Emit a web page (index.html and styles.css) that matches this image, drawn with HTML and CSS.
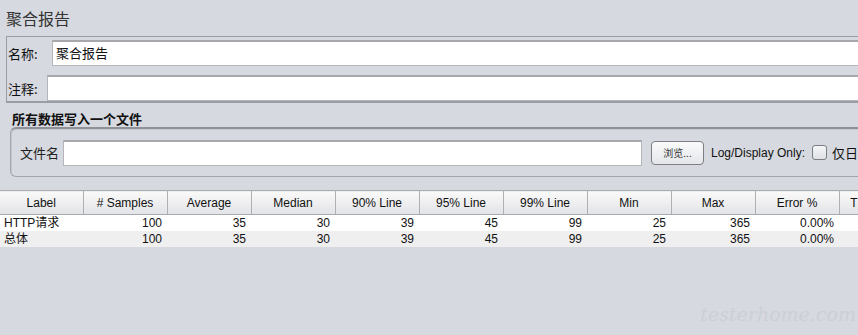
FILE: index.html
```html
<!DOCTYPE html>
<html>
<head>
<meta charset="utf-8">
<link rel="stylesheet" href="styles.css">
</head>
<body>
<div class="page">
  <div class="title">聚合报告</div>
  <div class="panel">
    <div class="row row-name">
      <span class="lbl">名称:</span>
      <div class="field field-name">聚合报告</div>
    </div>
    <div class="row row-comment">
      <span class="lbl lbl-c">注释:</span>
      <div class="field field-comment"></div>
    </div>
  </div>
  <div class="sec-title">所有数据写入一个文件</div>
  <div class="filebox">
    <span class="fl">文件名</span>
    <div class="field file-input"></div>
    <div class="btn">浏览...</div>
    <span class="logtxt">Log/Display Only:</span>
    <span class="check"></span>
    <span class="only">仅日志错误</span>
  </div>
  <table class="grid">
    <thead>
      <tr>
        <th class="c0">Label</th><th># Samples</th><th>Average</th><th>Median</th><th>90% Line</th><th>95% Line</th><th>99% Line</th><th>Min</th><th>Max</th><th>Error %</th><th>Throughput</th>
      </tr>
    </thead>
    <tbody>
      <tr class="r1">
        <td class="c0">HTTP请求</td><td>100</td><td>35</td><td>30</td><td>39</td><td>45</td><td>99</td><td>25</td><td>365</td><td>0.00%</td><td></td>
      </tr>
      <tr class="r2">
        <td class="c0">总体</td><td>100</td><td>35</td><td>30</td><td>39</td><td>45</td><td>99</td><td>25</td><td>365</td><td>0.00%</td><td></td>
      </tr>
    </tbody>
  </table>
  <div class="watermark">testerhome.com</div>
</div>
</body>
</html>
```
FILE: styles.css
```css
html, body {
  margin: 0;
  padding: 0;
  width: 858px;
  height: 335px;
  overflow: hidden;
  background: #d6d9df;
}
.page {
  position: relative;
  width: 858px;
  height: 335px;
  overflow: hidden;
  font-family: "Liberation Sans", "Noto Sans CJK SC", sans-serif;
  color: #111;
}
.title {
  font-family: "Noto Sans CJK SC", sans-serif;
  font-size: 16px;
  line-height: 20px;
  color: #333;
  padding: 8px 0 0 6px;
  height: 28px;
}
.panel {
  margin-left: 6px;
  width: 900px;
  height: 61px;
  border: 1px solid #9b9da2;
  border-bottom: 2px solid #9b9da2;
  padding: 3px 0 0 1px;
}
.row {
  display: flex;
  align-items: center;
  height: 26px;
}
.row-comment {
  margin-top: 9px;
}
.lbl {
  font-family: "Noto Sans CJK SC", sans-serif;
  font-size: 13px;
  width: 44px;
  color: #111;
}
.lbl-c {
  width: 39px;
}
.field {
  background: #fff;
  border: 1px solid #b4b6ba;
  border-top: 2px solid #a6a8ac;
  box-sizing: border-box;
  height: 26px;
}
.field-name, .field-comment {
  flex: 1;
}
.field-name {
  font-family: "Noto Sans CJK SC", sans-serif;
  font-size: 13px;
  line-height: 22px;
  padding-left: 3px;
}
.sec-title {
  font-family: "Noto Sans CJK SC", sans-serif;
  font-weight: bold;
  font-size: 13px;
  line-height: 16px;
  margin: 8px 0 0 12px;
  height: 16px;
  color: #111;
}
.filebox {
  margin-left: 10px;
  width: 900px;
  height: 50px;
  border: 1px solid #a4a6ab;
  border-top: 2px solid #8f9196;
  border-radius: 6px;
  box-shadow: inset 1px 1px 0 #c4c7cc;
  display: flex;
  align-items: center;
  box-sizing: border-box;
}
.fl {
  font-family: "Noto Sans CJK SC", sans-serif;
  font-size: 13px;
  margin-left: 9px;
  width: 43px;
  color: #222;
}
.file-input {
  width: 579px;
  height: 26px;
}
.btn {
  margin-left: 9px;
  width: 53px;
  height: 24px;
  box-sizing: border-box;
  border: 1px solid #7d7f84;
  border-radius: 4px;
  background: linear-gradient(#fbfbfc, #e4e6ea);
  font-family: "Noto Sans CJK SC", sans-serif;
  font-size: 10px;
  color: #333;
  display: flex;
  align-items: center;
  justify-content: center;
}
.logtxt {
  margin-left: 7px;
  font-size: 12px;
  color: #111;
}
.check {
  margin-left: 7px;
  width: 13px;
  height: 13px;
  border: 1px solid #7c7e83;
  border-radius: 3px;
  background: linear-gradient(#f4f5f7, #dfe1e5);
}
.only {
  margin-left: 5px;
  font-family: "Noto Sans CJK SC", sans-serif;
  font-size: 13px;
  white-space: nowrap;
}
.grid {
  margin-top: 13px;
  border-collapse: collapse;
  table-layout: fixed;
  width: 923px;
  font-size: 12px;
}
.grid th {
  width: 84px;
  height: 24px;
  box-sizing: border-box;
  padding: 0;
  font-weight: normal;
  color: #111;
  background: linear-gradient(#fafafa, #e2e3e6);
  border-top: 1px solid #a9abaf;
  border-bottom: 1px solid #a9abaf;
  border-right: 1px solid #aeb0b4;
  text-align: center;
  white-space: nowrap;
  overflow: hidden;
}
.grid th.c0 {
  width: 83px;
}
.grid td {
  height: 16px;
  padding: 0 5px 0 0;
  text-align: right;
  line-height: 16px;
  white-space: nowrap;
}
.grid td.c0 {
  text-align: left;
  padding-left: 4px;
}
.r1 td { background: #fff; }
.r2 td { background: #efefef; }
.watermark {
  position: absolute;
  right: 2px;
  bottom: 10px;
  font-family: "DejaVu Serif", serif;
  font-style: italic;
  font-weight: 300;
  font-size: 19px;
  color: #ccd0d6;
}
```
